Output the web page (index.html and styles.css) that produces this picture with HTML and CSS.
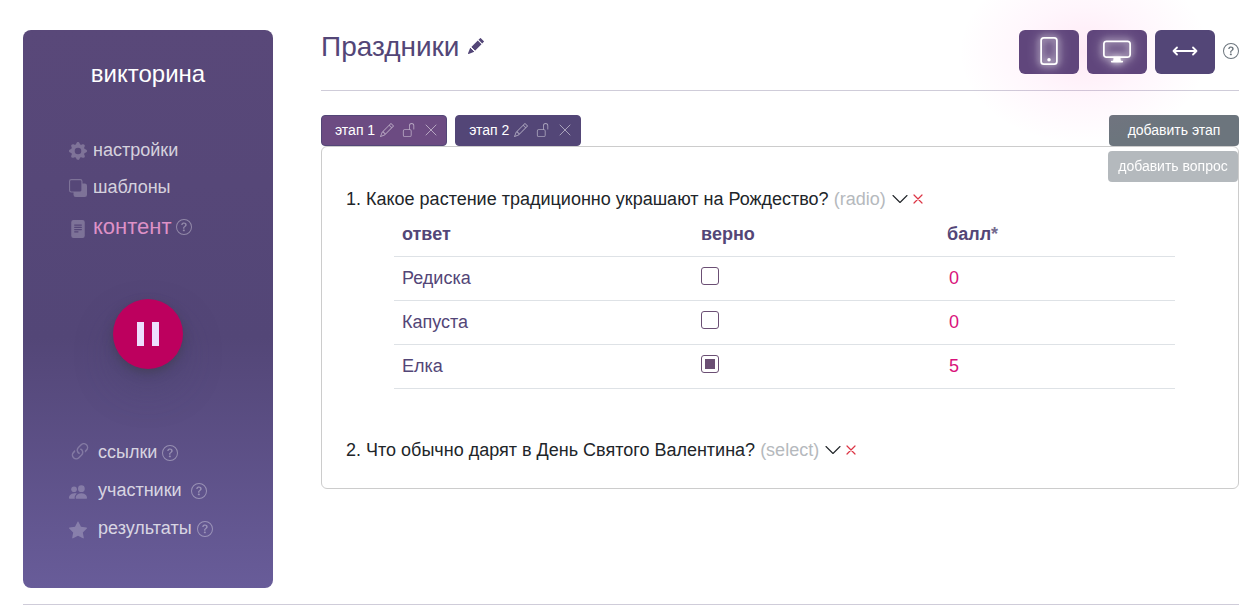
FILE: index.html
```html
<!DOCTYPE html>
<html lang="ru">
<head>
<meta charset="utf-8">
<meta name="viewport" content="width=device-width, initial-scale=1">
<title>Праздники</title>
<link rel="stylesheet" href="styles.css">
</head>
<body>
<svg class="sprite" aria-hidden="true">
  <symbol id="help" viewBox="0 0 16 16"><path d="M8 15A7 7 0 1 1 8 1a7 7 0 0 1 0 14zm0 1A8 8 0 1 0 8 0a8 8 0 0 0 0 16z"/><path d="M5.255 5.786a.237.237 0 0 0 .241.247h.825c.138 0 .248-.113.266-.25.09-.656.54-1.134 1.342-1.134.686 0 1.314.343 1.314 1.168 0 .635-.374.927-.965 1.371-.673.489-1.206 1.06-1.168 1.987l.003.217a.25.25 0 0 0 .25.246h.811a.25.25 0 0 0 .25-.25v-.105c0-.718.273-.927 1.01-1.486.609-.463 1.244-.977 1.244-2.056 0-1.511-1.276-2.241-2.673-2.241-1.267 0-2.655.59-2.75 2.286zm1.557 5.763c0 .533.425.927 1.01.927.609 0 1.028-.394 1.028-.927 0-.552-.42-.94-1.029-.94-.584 0-1.009.388-1.009.94z"/></symbol>
  <symbol id="pencil" viewBox="0 0 16 16"><path d="M12.146.146a.5.5 0 0 1 .708 0l3 3a.5.5 0 0 1 0 .708l-10 10a.5.5 0 0 1-.168.11l-5 2a.5.5 0 0 1-.65-.65l2-5a.5.5 0 0 1 .11-.168l10-10zM11.207 2.5 13.5 4.793 14.793 3.5 12.5 1.207 11.207 2.5zm1.586 3L10.5 3.207 4 9.707V10h.5a.5.5 0 0 1 .5.5v.5h.5a.5.5 0 0 1 .5.5v.5h.293l6.5-6.5zm-9.761 5.175-.106.106-1.528 3.821 3.821-1.528.106-.106A.5.5 0 0 1 5 12.5V12h-.5a.5.5 0 0 1-.5-.5V11h-.5a.5.5 0 0 1-.468-.325z"/></symbol>
  <symbol id="unlock" viewBox="0 0 16 16"><path d="M11 1a2 2 0 0 0-2 2v4a2 2 0 0 1 2 2v5a2 2 0 0 1-2 2H3a2 2 0 0 1-2-2V9a2 2 0 0 1 2-2h5V3a3 3 0 0 1 6 0v4a.5.5 0 0 1-1 0V3a2 2 0 0 0-2-2zM3 8a1 1 0 0 0-1 1v5a1 1 0 0 0 1 1h6a1 1 0 0 0 1-1V9a1 1 0 0 0-1-1H3z"/></symbol>
  <symbol id="cross" viewBox="0 0 14 14"><path d="M2 2l10 10M12 2L2 12" fill="none" stroke="currentColor" stroke-linecap="round"/></symbol>
  <symbol id="remove" viewBox="0 0 10 10"><path d="M1 1l8 8M9 1L1 9" fill="none" stroke="currentColor" stroke-width="1.200" stroke-linecap="round"/></symbol>
  <symbol id="chevron" viewBox="0 0 16 16"><path d="M1 3.500l7 7 7-7" fill="none" stroke="currentColor" stroke-width="1.100" stroke-linecap="round" stroke-linejoin="round"/></symbol>
</svg>

<div class="layout">
  <aside class="sidebar">
    <h2 class="brand">викторина</h2>
    <nav class="menu">
      <div class="item">
        <svg class="icon" viewBox="0 0 16 16"><path d="M9.405 1.05c-.413-1.4-2.397-1.4-2.81 0l-.1.34a1.464 1.464 0 0 1-2.105.872l-.31-.17c-1.283-.698-2.686.705-1.987 1.987l.169.311c.446.82.023 1.841-.872 2.105l-.34.1c-1.4.413-1.4 2.397 0 2.81l.34.1a1.464 1.464 0 0 1 .872 2.105l-.17.31c-.698 1.283.705 2.686 1.987 1.987l.311-.169a1.464 1.464 0 0 1 2.105.872l.1.34c.413 1.4 2.397 1.4 2.81 0l.1-.34a1.464 1.464 0 0 1 2.105-.872l.31.17c1.283.698 2.686-.705 1.987-1.987l-.169-.311a1.464 1.464 0 0 1 .872-2.105l.34-.1c1.4-.413 1.4-2.397 0-2.81l-.34-.1a1.464 1.464 0 0 1-.872-2.105l.17-.31c.698-1.283-.705-2.686-1.987-1.987l-.311.169a1.464 1.464 0 0 1-2.105-.872l-.1-.34zM8 10.930a2.929 2.929 0 1 1 0-5.860 2.929 2.929 0 0 1 0 5.858z"/></svg>
        <a href="#settings">настройки</a>
      </div>
      <div class="item">
        <svg class="icon" viewBox="0 0 16 16"><path d="M0 2a2 2 0 0 1 2-2h8a2 2 0 0 1 2 2v2h2a2 2 0 0 1 2 2v8a2 2 0 0 1-2 2H6a2 2 0 0 1-2-2v-2H2a2 2 0 0 1-2-2V2zm2-1a1 1 0 0 0-1 1v8a1 1 0 0 0 1 1h8a1 1 0 0 0 1-1V2a1 1 0 0 0-1-1H2z"/></svg>
        <a href="#templates">шаблоны</a>
      </div>
      <div class="item current">
        <svg class="icon" viewBox="0 0 16 16"><path d="M12 0H4a2 2 0 0 0-2 2v12a2 2 0 0 0 2 2h8a2 2 0 0 0 2-2V2a2 2 0 0 0-2-2zM5 4h6a.5.5 0 0 1 0 1H5a.5.5 0 1 1 0-1zm-.5 2.500A.5.5 0 0 1 5 6h6a.5.5 0 0 1 0 1H5a.5.5 0 0 1-.5-.5zM5 8h6a.5.5 0 0 1 0 1H5a.5.5 0 0 1 0-1zm0 2h3a.5.5 0 0 1 0 1H5a.5.5 0 0 1 0-1z"/></svg>
        <a href="#content" aria-current="page">контент</a>
        <svg class="help"><use href="#help"/></svg>
      </div>
    </nav>
    <button class="pause" type="button" aria-label="Пауза">
      <svg viewBox="0 0 24 26"><path d="M1 1h7v24H1zM16 1h7v24h-7z"/></svg>
    </button>
    <nav class="menu menu-lower">
      <div class="item">
        <svg class="icon icon-link" viewBox="2 2 12 12"><path d="M4.715 6.542 3.343 7.914a3 3 0 1 0 4.243 4.243l1.828-1.829A3 3 0 0 0 8.586 5.500L8 6.086a1.002 1.002 0 0 0-.154.199 2 2 0 0 1 .861 3.337L6.880 11.450a2 2 0 1 1-2.830-2.830l.793-.792a4.018 4.018 0 0 1-.128-1.287z"/><path d="M6.586 4.672A3 3 0 0 0 7.414 9.500l.775-.776a2 2 0 0 1-.896-3.346L9.120 3.550a2 2 0 1 1 2.830 2.830l-.793.792c.112.420.155.855.128 1.287l1.372-1.372a3 3 0 1 0-4.243-4.243L6.586 4.672z"/></svg>
        <a href="#links">ссылки</a>
        <svg class="help"><use href="#help"/></svg>
      </div>
      <div class="item members">
        <svg class="icon" viewBox="0 0 16 16"><path d="M7 14s-1 0-1-1 1-4 5-4 5 3 5 4-1 1-1 1H7zm4-6a3 3 0 1 0 0-6 3 3 0 0 0 0 6z"/><path d="M5.216 14A2.238 2.238 0 0 1 5 13c0-1.355.680-2.750 1.936-3.720A6.325 6.325 0 0 0 5 9c-4 0-5 3-5 4s1 1 1 1h4.216z"/><path d="M4.500 8a2.500 2.500 0 1 0 0-5 2.500 2.500 0 0 0 0 5z"/></svg>
        <a href="#members">участники</a>
        <svg class="help"><use href="#help"/></svg>
      </div>
      <div class="item">
        <svg class="icon" viewBox="0 0 16 16"><path d="M3.612 15.443c-.386.198-.824-.149-.746-.592l.830-4.730L.173 6.765c-.329-.314-.158-.888.283-.950l4.898-.696L7.538.792c.197-.390.730-.390.927 0l2.184 4.327 4.898.696c.441.062.612.636.282.950l-3.522 3.356.830 4.730c.078.443-.360.790-.746.592L8 13.187l-4.389 2.256z"/></svg>
        <a href="#results">результаты</a>
        <svg class="help"><use href="#help"/></svg>
      </div>
    </nav>
  </aside>

  <main class="main">
    <header class="header">
      <h1 class="title">Праздники</h1>
      <button class="plain edit-title" type="button" aria-label="Изменить название">
        <svg viewBox="0 0 16 16"><path d="M12.854.146a.5.5 0 0 0-.707 0L10.500 1.793 14.207 5.500l1.647-1.646a.5.5 0 0 0 0-.708l-3-3zm.646 6.061L9.793 2.500 3.293 9H3.500a.5.5 0 0 1 .5.5v.5h.5a.5.5 0 0 1 .5.5v.5h.5a.5.5 0 0 1 .5.5v.5h.5a.5.5 0 0 1 .5.5v.207l6.500-6.500zm-7.468 7.468A.5.5 0 0 1 6 13.500V13h-.5a.5.5 0 0 1-.5-.5V12h-.5a.5.5 0 0 1-.5-.5V11h-.5a.5.5 0 0 1-.5-.5V10h-.5a.499.499 0 0 1-.175-.032l-.179.178a.5.5 0 0 0-.110.168l-2 5a.5.5 0 0 0 .650.650l5-2a.5.5 0 0 0 .168-.110l.178-.178z"/></svg>
      </button>
      <div class="devices">
        <button class="device lit" type="button" aria-label="Телефон">
          <svg viewBox="0 0 16 16"><path d="M11 1a1 1 0 0 1 1 1v12a1 1 0 0 1-1 1H5a1 1 0 0 1-1-1V2a1 1 0 0 1 1-1h6zM5 0a2 2 0 0 0-2 2v12a2 2 0 0 0 2 2h6a2 2 0 0 0 2-2V2a2 2 0 0 0-2-2H5z"/><path d="M8 14a1 1 0 1 0 0-2 1 1 0 0 0 0 2z"/></svg>
        </button>
        <button class="device lit" type="button" aria-label="Компьютер">
          <svg viewBox="0 0 16 16"><path d="M0 4s0-2 2-2h12s2 0 2 2v6s0 2-2 2h-4c0 .667.083 1.167.250 1.500H11a.5.5 0 0 1 0 1H5a.5.5 0 0 1 0-1h.750c.167-.333.250-.833.250-1.500H2s-2 0-2-2V4zm1.398-.855a.758.758 0 0 0-.254.302A1.460 1.460 0 0 0 1 4.010V10c0 .325.078.502.145.602.070.105.170.188.302.254a1.464 1.464 0 0 0 .538.143L2.010 11H14c.325 0 .502-.078.602-.145a.758.758 0 0 0 .254-.302 1.464 1.464 0 0 0 .143-.538L15 9.990V4c0-.325-.078-.502-.145-.602a.757.757 0 0 0-.302-.254A1.460 1.460 0 0 0 13.990 3H2c-.325 0-.502.078-.602.145z"/></svg>
        </button>
        <button class="device" type="button" aria-label="По ширине">
          <svg viewBox="0 0 28 28"><path d="M2.500 14h23M6 10.500L2.500 14 6 17.500M22 10.500l3.500 3.500-3.500 3.500" fill="none" stroke="currentColor" stroke-width="1.800" stroke-linecap="round" stroke-linejoin="round"/></svg>
        </button>
        <svg class="help"><use href="#help"/></svg>
      </div>
    </header>

    <div class="stages">
      <div class="stage active">
        <button class="plain stage-name" type="button">этап 1</button>
        <button class="plain tool" type="button" aria-label="Изменить"><svg><use href="#pencil"/></svg></button>
        <button class="plain tool" type="button" aria-label="Разблокировать"><svg><use href="#unlock"/></svg></button>
        <button class="plain tool" type="button" aria-label="Удалить"><svg><use href="#cross"/></svg></button>
      </div>
      <div class="stage">
        <button class="plain stage-name" type="button">этап 2</button>
        <button class="plain tool" type="button" aria-label="Изменить"><svg><use href="#pencil"/></svg></button>
        <button class="plain tool" type="button" aria-label="Разблокировать"><svg><use href="#unlock"/></svg></button>
        <button class="plain tool" type="button" aria-label="Удалить"><svg><use href="#cross"/></svg></button>
      </div>
      <button class="add" type="button">добавить этап</button>
    </div>

    <section class="panel">
      <div class="panel-actions">
        <button class="add add-question" type="button">добавить вопрос</button>
      </div>
      <div class="questions">
        <article>
          <div class="question">
            <span>1. Какое растение традиционно украшают на Рождество?</span>
            <span class="kind">(radio)</span>
            <button class="plain toggle" type="button" aria-label="Развернуть"><svg><use href="#chevron"/></svg></button>
            <button class="plain remove" type="button" aria-label="Удалить"><svg><use href="#remove"/></svg></button>
          </div>
          <table class="answers">
            <thead>
              <tr><th class="col-answer">ответ</th><th class="col-right">верно</th><th>балл<span class="star">*</span></th></tr>
            </thead>
            <tbody>
              <tr><td>Редиска</td><td><input class="check" type="checkbox" aria-label="Редиска верно"></td><td class="score">0</td></tr>
              <tr><td>Капуста</td><td><input class="check" type="checkbox" aria-label="Капуста верно"></td><td class="score">0</td></tr>
              <tr><td>Елка</td><td><input class="check" type="checkbox" aria-label="Елка верно" checked></td><td class="score">5</td></tr>
            </tbody>
          </table>
        </article>
        <article>
          <div class="question">
            <span>2. Что обычно дарят в День Святого Валентина?</span>
            <span class="kind">(select)</span>
            <button class="plain toggle" type="button" aria-label="Развернуть"><svg><use href="#chevron"/></svg></button>
            <button class="plain remove" type="button" aria-label="Удалить"><svg><use href="#remove"/></svg></button>
          </div>
        </article>
      </div>
    </section>
  </main>
</div>
<hr class="footer-line">
</body>
</html>
```
FILE: styles.css
```css
* {
  box-sizing: border-box;
}

body {
  margin: 0;
  padding: 30px 11px 0 23px;
  background: #fff;
  color: #212529;
  font: 18px/27px "Liberation Sans", Arial, sans-serif;
}

h1,
h2 {
  margin: 0;
  font-weight: 400;
}

svg {
  display: block;
  flex: none;
  fill: currentColor;
}

button {
  font: inherit;
  cursor: pointer;
}

.sprite {
  display: none;
}

.plain {
  padding: 0;
  border: 0;
  background: none;
  color: inherit;
}

.layout {
  display: flex;
  align-items: flex-start;
  gap: 48px;
}

/* Sidebar */

.sidebar {
  display: flex;
  flex: none;
  flex-direction: column;
  width: 250px;
  padding: 26px 0 46px;
  border-radius: 8px;
  background: linear-gradient(#594879, #534677 55%, #685c99);
}

.brand {
  color: #fff;
  font-size: 24px;
  line-height: 36px;
  text-align: center;
}

.menu {
  display: flex;
  flex-direction: column;
  gap: 10px;
  padding: 45px 0 56px 46px;
}

.menu-lower {
  gap: 11px;
  padding: 70px 0 0 46px;
}

.item {
  display: flex;
  align-items: center;
  gap: 6px;
  color: rgba(255, 255, 255, 0.77);
}

.menu-lower .item {
  gap: 5px;
}

.menu-lower .icon {
  margin-top: 2px;
  margin-right: 6px;
}

.members a {
  margin-right: 4px;
}

.item a {
  color: inherit;
  text-decoration: none;
}

.menu .current {
  gap: 4px;
  font-size: 22px;
  line-height: 32px;
}

.current a {
  color: #de91c6;
}

.current .icon {
  margin-top: 4px;
  margin-right: 2px;
}

.icon {
  width: 18px;
  height: 18px;
  color: rgba(255, 255, 255, 0.24);
}

.menu-lower .icon-link {
  margin: 0 4px 2px 2px;
}

.help {
  width: 16px;
  height: 16px;
  color: rgba(255, 255, 255, 0.36);
}

.pause {
  display: flex;
  align-items: center;
  align-self: center;
  justify-content: center;
  width: 70px;
  height: 70px;
  padding: 0;
  border: 0;
  border-radius: 50%;
  background: #bd005e;
  box-shadow: 0 4px 10px rgba(60, 60, 70, 0.5), 0 20px 40px rgba(60, 60, 100, 0.25);
  color: #eddfff;
}

.pause svg {
  width: 24px;
  height: 26px;
}

/* Page header */

.main {
  flex: 1;
  min-width: 0;
}

.header {
  display: flex;
  align-items: flex-start;
  gap: 8px;
  padding-bottom: 16px;
  border-bottom: 1px solid #cfccd9;
  color: #534677;
}

.title {
  font-size: 28px;
  line-height: 34px;
}

.edit-title {
  padding-top: 8px;
}

.edit-title svg {
  width: 16px;
  height: 16px;
}

.devices {
  position: relative;
  z-index: 0;
  display: flex;
  align-items: center;
  gap: 8px;
  margin-left: auto;
}

.devices::before {
  position: absolute;
  z-index: -1;
  inset: -70px 30px -70px -60px;
  background:
    radial-gradient(closest-side, rgba(255, 60, 170, 0.11), rgba(255, 80, 200, 0.05) 50%, transparent);
  content: "";
  pointer-events: none;
}

.devices .help {
  margin-bottom: 2px;
  color: #6c757d;
}

.device {
  display: flex;
  align-items: center;
  justify-content: center;
  width: 60px;
  height: 44px;
  padding: 0 0 2px;
  border: 0;
  border-radius: 6px;
  background: #534677;
  color: #fff;
}

.device svg {
  width: 28px;
  height: 28px;
}

.lit {
  background: #60467c;
}

.lit svg {
  filter: drop-shadow(0 0 3px rgba(255, 255, 255, 0.8)) drop-shadow(0 0 6px rgba(255, 255, 255, 0.7));
}

/* Stages */

.stages {
  display: flex;
  gap: 8px;
  margin-top: 24px;
  font-size: 14px;
  line-height: 21px;
}

.stage {
  display: flex;
  align-items: center;
  gap: 8px;
  padding: 4px 8px 4px 13px;
  border: 1px solid #534677;
  border-radius: 4px;
  background: #534677;
  color: #fff;
}

.active {
  background: #6c4b82;
}

.stage-name {
  margin-right: -3px;
}

.tool {
  padding-bottom: 1px;
  color: rgba(255, 255, 255, 0.5);
}

.tool svg {
  width: 14px;
  height: 14px;
}

.add {
  min-width: 130px;
  margin-left: auto;
  padding: 5px 10px;
  border: 0;
  border-radius: 4px;
  background: #6c757d;
  color: #fff;
  font-size: 14px;
  line-height: 21px;
}

.add-question {
  opacity: 0.5;
}

/* Questions */

.panel {
  border: 1px solid #ccc;
  border-radius: 6px;
}

.panel-actions {
  display: flex;
  padding-top: 4px;
}

.questions {
  display: flex;
  flex-direction: column;
  gap: 48px;
  padding: 4px 24px 24px;
}

.question {
  display: flex;
  align-items: center;
  gap: 5px;
}

.kind {
  color: #b5b9bd;
}

.toggle svg {
  width: 16px;
  height: 16px;
}

.toggle {
  margin-left: 1px;
}

.remove {
  padding-bottom: 2px;
  color: #dc3545;
}

.remove svg {
  width: 10px;
  height: 10px;
}

.answers {
  width: calc(100% - 87px);
  margin-left: 48px;
  border-collapse: separate;
  border-spacing: 0;
  color: #534677;
  table-layout: fixed;
}

.answers th,
.answers td {
  height: 44px;
  padding: 8px;
  border-bottom: 1px solid #dee2e6;
  text-align: left;
  vertical-align: top;
}

.answers .col-answer {
  width: 38.3%;
}

.answers .col-right {
  width: 31.5%;
}

.star {
  color: #746b8f;
}

.answers .score {
  padding-left: 10px;
  color: #d9127b;
}

.check {
  display: block;
  width: 18px;
  height: 18px;
  margin: 2px 0 0;
  border: 1px solid #6b4f74;
  border-radius: 3px;
  appearance: none;
  background: #fff;
}

.check:checked {
  padding: 3px;
  background: #6b4f74 content-box;
}

/* Footer */

.footer-line {
  margin: 16px 0 0;
  border: 0;
  border-top: 1px solid #cfccd9;
}
```
